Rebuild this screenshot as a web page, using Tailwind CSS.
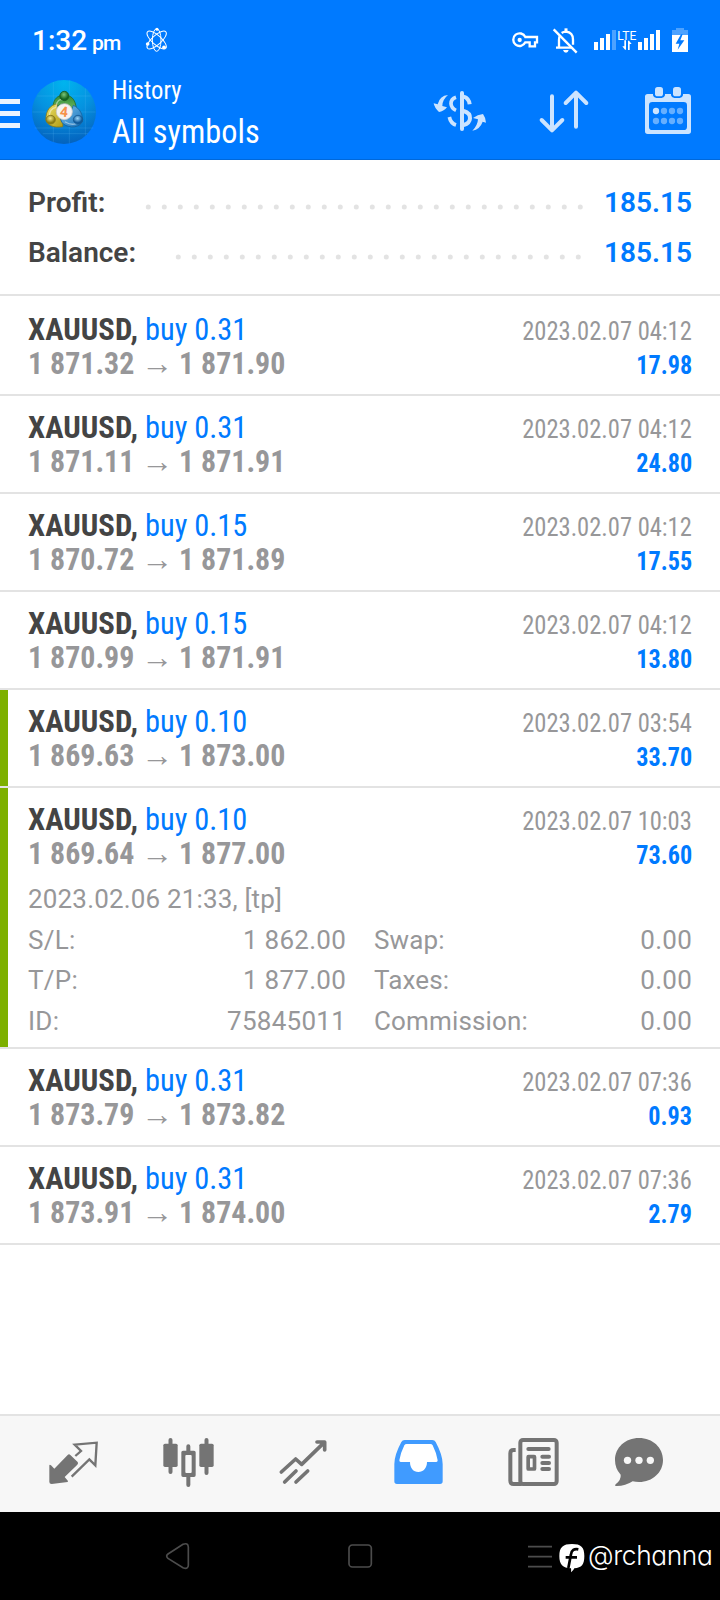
<!DOCTYPE html>
<html lang="en">
<head>
<meta charset="utf-8">
<title>History</title>
<script src="https://cdn.jsdelivr.net/npm/@tailwindcss/browser@4"></script>
</head>
<body class="bg-white">
<div class="flex h-[1600px] w-[720px] flex-col overflow-hidden bg-white font-['Roboto',sans-serif] whitespace-nowrap text-[#979799]">

  <header class="h-[160px] shrink-0 border-b border-[#0068da] bg-[#007aff] text-white">
    <div class="flex h-[72px] items-center pt-2 pr-[30px] pl-[32px]">
      <div class="flex items-baseline pt-[5px] font-medium">
        <span class="w-[60px] text-[28px] leading-8">1:32</span>
        <span class="w-[52px] text-[21px] tracking-[-0.8px]">pm</span>
      </div>
      <svg class="h-[30px] w-[25px]" viewBox="432 75 75 90" fill="none" stroke="#fff" stroke-width="3">
        <ellipse cx="470" cy="120" rx="13" ry="34"/>
        <ellipse cx="470" cy="120" rx="14" ry="37" transform="rotate(-48 470 120)"/>
        <ellipse cx="470" cy="120" rx="14" ry="37" transform="rotate(48 470 120)"/>
        <g fill="#fff" stroke="none"><circle cx="443" cy="132" r="5.5"/><circle cx="492" cy="142" r="5.5"/><circle cx="471" cy="88" r="4.5"/></g>
      </svg>
      <div class="ml-auto flex">
        <svg class="mr-[10px] h-[30px] w-[30px]" viewBox="330 75 90 90" fill="none" stroke="#fff" stroke-width="7">
          <path d="M376 111H411V127H405V139H389V127H376A19 19 0 1 1 376 111Z"/><circle cx="359" cy="120" r="6.5" fill="#fff" stroke="none"/>
        </svg>
        <svg class="mr-[12px] h-[30px] w-[30px]" viewBox="450 75 90 90" fill="none" stroke="#fff" stroke-width="7">
          <path d="M461 88L530 158"/><path d="M468 143H514M477 143V119Q477 112 480 107M485 99Q490 95 498 95Q519 97 519 119V134"/>
          <path d="M498 85V95" stroke-width="9"/><path d="M489 150H506Q504 158 498 158Q491 158 489 150Z" fill="#fff" stroke="none"/>
        </svg>
        <svg class="mr-[8px] h-[30px] w-[70px]" viewBox="576 75 210 90" fill="#fff">
          <path d="M582 126h12v24h-12zM600 114h12v36h-12zM618 102h12v48h-12zM714 126h12v24h-12zM732 114h12v36h-12zM750 102h12v48h-12zM768 90h12v60h-12z"/>
          <path d="M636 90h12v60h-12z" opacity=".3"/>
          <text x="652" y="120" font-family="Roboto" font-size="36" textLength="57" lengthAdjust="spacingAndGlyphs">LTE</text>
          <path d="M673 121h5v28h-3l-8-10h6zM684 150v-28h3l8 10h-6v18z"/>
        </svg>
        <svg class="h-[30px] w-[20px]" viewBox="810 75 60 90">
          <path d="M828 84h24v6h12v15h-48V90h12z" fill="#fff" opacity=".3"/><path d="M816 105h48v51h-48z" fill="#fff"/>
          <path d="M843 103L827 131H838L833 149L853 121H841L848 103Z" fill="#007aff"/>
        </svg>
      </div>
    </div>

    <div class="flex h-[87px] items-start">
      <div class="mt-[27px] flex w-5 flex-col gap-[7px]">
        <i class="h-[5px] bg-[#ebf4ff]"></i><i class="h-[5px] bg-[#ebf4ff]"></i><i class="h-[5px] bg-[#ebf4ff]"></i>
      </div>
      <svg class="mt-2 ml-3 h-16 w-16" viewBox="96 240 192 192">
        <defs>
          <radialGradient id="sky" cx="50%" cy="5%" r="95%"><stop offset="0" stop-color="#00b4ee"/><stop offset=".5" stop-color="#0592e0"/><stop offset="1" stop-color="#0462bd"/></radialGradient>
          <linearGradient id="gr" x2="0" y2="1"><stop offset="0" stop-color="#2f8a35"/><stop offset="1" stop-color="#7fc66d"/></linearGradient>
          <linearGradient id="ye" x2="1" y2="1"><stop offset="0" stop-color="#efe36a"/><stop offset="1" stop-color="#b09a14"/></linearGradient>
          <linearGradient id="bl" x2="1" y2="1"><stop offset="0" stop-color="#78c2ee"/><stop offset="1" stop-color="#1670b9"/></linearGradient>
          <radialGradient id="gh" cx="45%" cy="35%"><stop offset="0" stop-color="#7cc779"/><stop offset="1" stop-color="#14641f"/></radialGradient>
          <radialGradient id="yh" cx="45%" cy="35%"><stop offset="0" stop-color="#f5ec8b"/><stop offset="1" stop-color="#8f7f12"/></radialGradient>
          <radialGradient id="bh" cx="45%" cy="35%"><stop offset="0" stop-color="#9bd6f8"/><stop offset="1" stop-color="#0d5a9e"/></radialGradient>
        </defs>
        <circle cx="192" cy="336" r="96" fill="url(#sky)"/>
        <path d="M160 246V426M208 241V431M256 265V407M112 288H272M97 336H287M104 384H280M128 401H264" stroke="#6fc6ff" stroke-opacity=".22" stroke-width="2.5"/>
        <g stroke-width="2.5">
          <path d="M159 322C160 296 174 285 193 285S226 296 229 326L218 342L193 310Z" fill="url(#gr)" stroke="#236c2b"/>
          <path d="M171 312C152 314 136 332 138 360C143 377 162 384 188 380L190 352L172 335Z" fill="url(#ye)" stroke="#8c7c17"/>
          <path d="M220 316C240 325 250 345 247 365C238 383 210 386 190 372C184 366 182 360 182 356L206 356Z" fill="url(#bl)" stroke="#16619e"/>
          <path d="M168 320C170 302 180 296 188 300M148 350C148 334 156 324 168 322M196 366C210 374 222 374 230 370" fill="none" stroke="#fff" stroke-opacity=".45" stroke-width="4" stroke-linecap="round"/>
          <ellipse cx="193" cy="288" rx="13.500" ry="14" fill="url(#gh)" stroke="#185d20"/>
          <ellipse cx="152" cy="359" rx="14" ry="13" fill="url(#yh)" stroke="#84751a"/>
          <ellipse cx="234" cy="359" rx="14" ry="13" fill="url(#bh)" stroke="#155b95"/>
          <circle cx="193" cy="335" r="24" fill="#f5f3f2" stroke="#c9c9c9"/>
        </g>
        <text x="192" y="350" text-anchor="middle" font-family="Roboto" font-weight="700" font-size="42" fill="#f6914a" transform="rotate(6 192 336)">4</text>
      </svg>
      <div class="ml-4 flex flex-col pt-1 font-['Roboto_Condensed','Roboto',sans-serif] font-[450]">
        <span class="w-[76px] origin-left scale-x-[0.945] text-[26px] leading-[28px]">History</span>
        <span class="mt-[7px] w-[158px] origin-left scale-x-[0.95] text-[34px] leading-[40px]">All symbols</span>
      </div>
      <svg class="mt-[17px] ml-auto h-[44px] w-[54px]" viewBox="99 267 162 132" fill="none" stroke="#cce4ff" stroke-width="11">
        <path d="M186 279V387" stroke-width="12" stroke-linecap="round"/>
        <path d="M168 292Q153 297 153 311Q154 325 168 331M148 351Q152 370 168 375"/>
        <path d="M191 290Q207 295 209 313M191 333Q211 339 210 355Q209 370 191 375" stroke-width="12"/>
        <path d="M144 285Q119 287 113 313L101 310Q103 323 117 336Q130 335 141 322L127 318Q127 299 144 285ZM217 392Q240 388 248 365L258 368Q257 353 249 342Q233 343 219 354L234 358Q233 377 217 392Z" fill="#cce4ff" stroke="none"/>
      </svg>
      <svg class="mt-[17px] ml-[51px] h-[46px] w-[52px]" viewBox="414 267 156 138" fill="none" stroke="#cce4ff" stroke-width="12" stroke-linecap="round" stroke-linejoin="round">
        <path d="M456 289V390M425 360L456 391L487 360M528 380V279M497 309L528 278L559 309"/>
      </svg>
      <svg class="mt-[14px] mr-[28px] ml-[54px] h-[49px] w-[48px]" viewBox="732 258 144 147">
        <path fill="#cce4ff" fill-rule="evenodd" d="M743 282H759V286Q761 294 769 294H785Q793 294 795 286V282H813V286Q815 294 823 294H839Q847 294 849 286V282H865Q873 282 873 290V394Q873 402 865 402H743Q735 402 735 394V290Q735 282 743 282ZM757 306Q747 306 747 316V380Q747 390 757 390H851Q861 390 861 380V316Q861 306 851 306Z"/>
        <rect x="765" y="261" width="24" height="28" rx="8" fill="#cce4ff"/><rect x="819" y="261" width="24" height="28" rx="8" fill="#cce4ff"/>
        <circle cx="768" cy="333" r="9.500" fill="#cce4ff"/>
        <g fill="#66afff"><circle cx="792" cy="333" r="9.500"/><circle cx="816" cy="333" r="9.500"/><circle cx="840" cy="333" r="9.500"/><circle cx="768" cy="363" r="9.500"/><circle cx="792" cy="363" r="9.500"/><circle cx="816" cy="363" r="9.500"/><circle cx="840" cy="363" r="9.500"/></g>
      </svg>
    </div>
  </header>

  <section class="h-[136px] shrink-0 border-b-2 border-[#e3e3e3] pt-[18px] pr-[28px] pl-[28px] text-[28px] leading-[50px] font-semibold text-[#444]">
    <div class="flex h-[50px]">
      <span class="w-[117px]">Profit:</span>
      <svg class="mt-[25px] h-[8px] w-[440px]" viewBox="145 203.300 440 8"><path d="M148.300 207.300H580.400" stroke="#e3e3e3" stroke-width="5" stroke-linecap="round" stroke-dasharray="0 16"/></svg>
      <span class="ml-auto text-[#007aff]">185.15</span>
    </div>
    <div class="flex h-[50px]">
      <span class="w-[147px]">Balance:</span>
      <svg class="mt-[25px] h-[8px] w-[410px]" viewBox="175 203.300 410 8"><path d="M178.300 207.300H578.400" stroke="#e3e3e3" stroke-width="5" stroke-linecap="round" stroke-dasharray="0 16"/></svg>
      <span class="ml-auto text-[#007aff]">185.15</span>
    </div>
  </section>

  <main id="deals" class="flex-1 pt-[2px]"></main>

  <nav class="flex h-[98px] shrink-0 border-t-2 border-[#e3e3e3] bg-[#f7f7f7] pl-[43px]">
    <svg class="mr-[55px] h-24 w-[60px]" viewBox="129 48 180 288" fill="#747474">
      <path d="M148 196Q149 193 153 196L163 206L203 165Q207 161 211 165L233 186Q236 190 232 194L194 231L204 243L203 246L155 252Q148 252 148 246Z"/>
      <path d="M226 168L243 153L224 134L290 128L286 196L268 178L215 230" fill="none" stroke="#747474" stroke-width="7"/>
    </svg>
    <svg class="mr-[55px] h-24 w-[60px]" viewBox="474 48 180 288" fill="#747474">
      <rect x="490" y="131" width="43" height="70" rx="5"/><rect x="598" y="131" width="43" height="70" rx="5"/>
      <path d="M511.500 120V216M619.500 120V219M565 139V158M565 228V255" stroke="#747474" stroke-width="12" stroke-linecap="round"/>
      <path fill-rule="evenodd" d="M549 152H582Q587 152 587 157V226Q587 231 582 231H549Q544 231 544 226V157Q544 152 549 152ZM559 165Q556 165 556 168V216Q556 219 559 219H572Q575 219 575 216V168Q575 165 572 165Z"/>
    </svg>
    <svg class="mr-[55px] h-24 w-[60px]" viewBox="819 48 180 288" fill="none" stroke="#747474" stroke-width="11" stroke-linecap="round" stroke-linejoin="round">
      <path d="M844 216L887 177L905 193L973 127M951 126H974V150M854 246L888 213M888 246L923 213"/>
    </svg>
    <svg class="mr-[55px] h-24 w-[60px]" viewBox="84 48 180 288">
      <path d="M134 128H217L240 188H201V220H150V188H112Z" fill="#fff"/>
      <path fill="#409bff" fill-rule="evenodd" d="M134 120H217Q224 120 227 126Q248 165 248 192V244Q248 252 240 252H111Q103 252 103 244V192Q103 165 124 126Q127 120 134 120ZM140 132Q135 132 133 136Q122 158 118 181Q118 186 122 186H150C150 204 160 216 175 216S201 204 201 186H229Q233 186 233 181Q229 158 218 136Q216 132 211 132Z"/>
    </svg>
    <svg class="mr-[46px] h-24 w-[60px]" viewBox="429 48 180 288" fill="none" stroke="#747474" stroke-width="12">
      <rect x="481" y="120" width="109" height="132" rx="8"/><path d="M467 150H461Q451 150 451 160V242Q451 252 461 252H485"/>
      <path d="M505 147H566M547 170H567M547 189H567M547 207H567" stroke-linecap="round"/>
      <rect x="504.500" y="170" width="19" height="37" rx="1" stroke-width="11"/>
    </svg>
    <svg class="h-24 w-[60px]" viewBox="747 48 180 288">
      <path fill="#747474" d="M837 114C878 114 909 143 909 180S878 246 837 246Q827 246 818 244Q795 259 767 258Q763 257 767 253Q784 239 782 224Q765 206 765 180C765 143 796 114 837 114Z"/>
      <g fill="#f7f7f7"><circle cx="802.500" cy="181" r="11"/><circle cx="837" cy="181" r="11"/><circle cx="871" cy="181" r="11"/></g>
    </svg>
  </nav>

  <footer class="flex h-[88px] shrink-0 bg-black pl-[160px]">
    <svg class="h-[88px] w-9" viewBox="480 336 108 264" fill="none" stroke="#4c4c4c" stroke-width="5"><path d="M504 462Q496 468 504 475L549 503Q565 509 565 496V441Q564 427 549 433Z"/></svg>
    <svg class="ml-[146px] h-[88px] w-9" viewBox="1026 336 108 264" fill="none" stroke="#4c4c4c" stroke-width="5"><rect x="1047" y="435" width="67" height="66" rx="10"/></svg>
    <svg class="ml-[146px] h-[88px] w-8" viewBox="492 336 96 264" stroke="#4c4c4c" stroke-width="5"><path d="M504 440H576M504 470H576M504 500H576"/></svg>
    <svg class="ml-[2px] h-[88px] w-7" viewBox="594 336 84 264">
      <path fill="#fff" d="M636 432C663 432 673 441 673 468C673 494 665 503 643 505Q641 511 633 517Q634 510 633 505C608 504 598 494 598 468C598 441 609 432 636 432Z"/>
      <path d="M655 448Q636 444 633 463L625 504M617 472H651" fill="none" stroke="#000" stroke-width="8"/>
    </svg>
    <span class="ml-[2px] w-[132px] origin-left scale-x-[0.975] font-['Inter','Roboto',sans-serif] text-[27px] leading-[87px] font-[350] tracking-[-0.4px] text-white [font-feature-settings:'cv11']">@rchanna</span>
  </footer>
</div>

<script>
  const deals = [
    { lots: "0.31", from: "1 871.32", to: "1 871.90", time: "2023.02.07 04:12", profit: "17.98" },
    { lots: "0.31", from: "1 871.11", to: "1 871.91", time: "2023.02.07 04:12", profit: "24.80" },
    { lots: "0.15", from: "1 870.72", to: "1 871.89", time: "2023.02.07 04:12", profit: "17.55" },
    { lots: "0.15", from: "1 870.99", to: "1 871.91", time: "2023.02.07 04:12", profit: "13.80" },
    { lots: "0.10", from: "1 869.63", to: "1 873.00", time: "2023.02.07 03:54", profit: "33.70", tp: true },
    { lots: "0.10", from: "1 869.64", to: "1 877.00", time: "2023.02.07 10:03", profit: "73.60", tp: true, open: true },
    { lots: "0.31", from: "1 873.79", to: "1 873.82", time: "2023.02.07 07:36", profit: "0.93" },
    { lots: "0.31", from: "1 873.91", to: "1 874.00", time: "2023.02.07 07:36", profit: "2.79" },
  ];
  const details = [
    ["S/L:", "1 862.00", "Swap:", "0.00"],
    ["T/P:", "1 877.00", "Taxes:", "0.00"],
    ["ID:", "75845011", "Commission:", "0.00"],
  ];
  const detailRows = details.map(([a, b, c, d]) => `
    <div class="flex h-[40.4px] leading-[40.4px]">
      <span>${a}</span><span class="ml-auto">${b}</span>
      <span class="ml-[28px] w-[200px] tracking-[0.15px]">${c}</span><span class="w-[118px] text-right">${d}</span>
    </div>`).join("");
  document.getElementById("deals").innerHTML = deals.map(d => `
    <article class="flex border-b-2 border-[#e3e3e3] ${d.open ? "h-[261px]" : "h-[98px]"}">
      <div class="w-2 shrink-0 ${d.tp ? "bg-[#7db000]" : ""}"></div>
      <div class="w-[684px] pt-[14px] pl-[20px]">
        <div class="font-['Roboto_Condensed','Roboto',sans-serif]">
          <div class="flex h-[34px] items-baseline text-[32px] leading-[34px]">
            <b class="w-[117px] origin-left scale-x-[0.96] font-bold text-[#444]">XAUUSD,</b>
            <span class="origin-left scale-x-[0.95] text-[#007aff]">buy ${d.lots}</span>
            <span class="ml-auto origin-right scale-x-[0.943] text-[26px]">${d.time}</span>
          </div>
          <div class="flex h-[34px] items-baseline text-[32px] leading-[34px] font-bold">
            <span class="w-[113px] origin-left scale-x-[0.935]">${d.from}</span>
            <span class="w-[38px] font-normal">→</span>
            <span class="origin-left scale-x-[0.935]">${d.to}</span>
            <span class="ml-auto origin-right scale-x-[0.93] text-[26px] text-[#007aff]">${d.profit}</span>
          </div>
        </div>
        ${d.open ? `<div class="pt-[9px] text-[26px] tracking-[0.25px]"><div class="mb-px h-10 leading-10 tracking-[0.17px]">2023.02.06 21:33, [tp]</div>${detailRows}</div>` : ""}
      </div>
    </article>`).join("");
</script>
</body>
</html>
